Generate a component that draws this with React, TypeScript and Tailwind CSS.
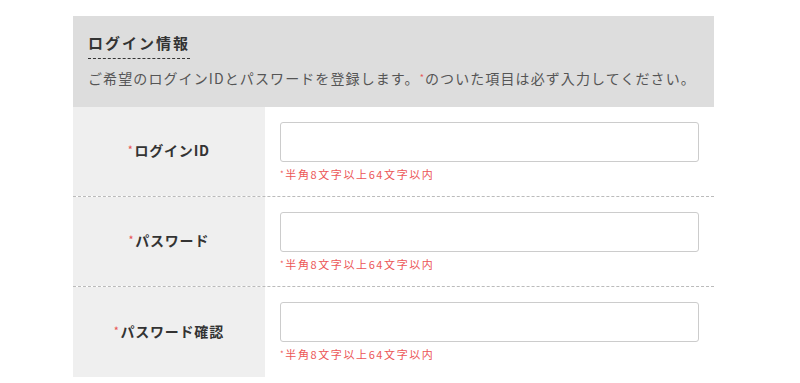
const font = { fontFamily: '"Noto Sans CJK JP", "Noto Sans", sans-serif' };

const rows = [
  { id: 'login', label: 'ログインID', type: 'text' },
  { id: 'pass', label: 'パスワード', type: 'password' },
  { id: 'confirm', label: 'パスワード確認', type: 'password' },
];

export default function App() {
  return (
    <div className="w-[800px] h-[383px] bg-white overflow-hidden pt-[16px]" style={font}>
      <section className="ml-[73px] w-[641px]">
        <div className="bg-[#dddddd] px-[15px] pt-[14px] pb-[19px]">
          <h2 className="inline-block text-[15px] font-bold text-[#333] leading-[24px] border-b border-dashed border-[#333] pb-[3px] tracking-[2px]">
            ログイン情報
          </h2>
          <p className="mt-[9px] text-[14px] text-[#555] leading-[20px] tracking-[1.1px]">
            ご希望のログインIDとパスワードを登録します。<span className="inline-block leading-none translate-y-[-3px] text-[#e85a5a] text-[9px]">*</span>のついた項目は必ず入力してください。
          </p>
        </div>
        {rows.map((row, i) => (
          <div
            key={row.id}
            className={`flex h-[90px] ${i < rows.length - 1 ? 'border-b border-dashed border-[#bbbbbb]' : ''}`}
          >
            <div className="w-[192px] bg-[#efefef] flex items-center justify-center pb-[2px]">
              <span className="text-[14px] font-bold text-[#333] tracking-[0.8px]">
                <span className="inline-block leading-none translate-y-[-3px] text-[#e85a5a] text-[9px] mr-[1px]">*</span>
                {row.label}
              </span>
            </div>
            <div className="flex-1 pl-[15px] pr-[15px] pt-[15px]">
              <input
                type={row.type}
                className="block w-full h-[40px] border border-[#cccccc] rounded-[3px] bg-white outline-none px-2"
              />
              <p className="mt-[5px] text-[11px] text-[#ec5656] leading-[14px] tracking-[1.6px]">
                <span className="inline-block leading-none translate-y-[-2px] text-[8px]">*</span>半角8文字以上64文字以内
              </p>
            </div>
          </div>
        ))}
      </section>
    </div>
  );
}
